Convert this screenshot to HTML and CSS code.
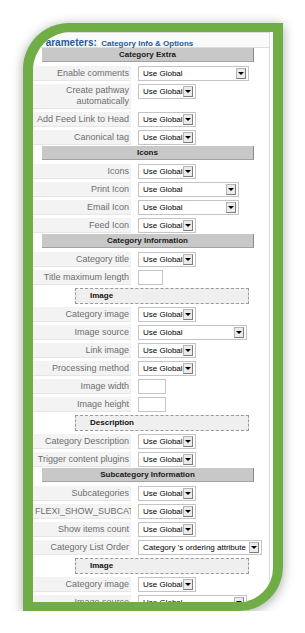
FILE: index.html
```html
<!DOCTYPE html>
<html lang="en">
<head>
    <meta charset="UTF-8">
    <meta name="viewport" content="width=device-width, initial-scale=1.0">
    <title>Category Parameters</title>
    <link rel="stylesheet" href="styles.css">
</head>
<body>
    <div class="page">
        <div class="frame">
            <div class="panel">
                <div class="sheet">
                    <div class="params-title"><span class="params-name">Parameters:</span> <span class="params-sub">Category Info &amp; Options</span></div>

                    <div class="section">Category Extra</div>
                    <div class="row"><div class="key">Enable comments</div><div class="val"><span class="select w-111">Use Global<i class="arrow"></i></span></div></div>
                    <div class="row tall"><div class="key">Create pathway<br>automatically</div><div class="val"><span class="select">Use Global<i class="arrow"></i></span></div></div>
                    <div class="row"><div class="key">Add Feed Link to Head</div><div class="val"><span class="select">Use Global<i class="arrow"></i></span></div></div>
                    <div class="row"><div class="key">Canonical tag</div><div class="val"><span class="select">Use Global<i class="arrow"></i></span></div></div>

                    <div class="section">Icons</div>
                    <div class="row"><div class="key">Icons</div><div class="val"><span class="select">Use Global<i class="arrow"></i></span></div></div>
                    <div class="row"><div class="key">Print Icon</div><div class="val"><span class="select w-101">Use Global<i class="arrow"></i></span></div></div>
                    <div class="row"><div class="key">Email Icon</div><div class="val"><span class="select w-101">Use Global<i class="arrow"></i></span></div></div>
                    <div class="row"><div class="key">Feed Icon</div><div class="val"><span class="select">Use Global<i class="arrow"></i></span></div></div>

                    <div class="section">Category Information</div>
                    <div class="row"><div class="key">Category title</div><div class="val"><span class="select">Use Global<i class="arrow"></i></span></div></div>
                    <div class="row"><div class="key">Title maximum length</div><div class="val"><span class="text w-25"></span></div></div>
                    <div class="sub">Image</div>
                    <div class="row"><div class="key">Category image</div><div class="val"><span class="select">Use Global<i class="arrow"></i></span></div></div>
                    <div class="row"><div class="key">Image source</div><div class="val"><span class="select w-109">Use Global<i class="arrow"></i></span></div></div>
                    <div class="row"><div class="key">Link image</div><div class="val"><span class="select">Use Global<i class="arrow"></i></span></div></div>
                    <div class="row"><div class="key">Processing method</div><div class="val"><span class="select">Use Global<i class="arrow"></i></span></div></div>
                    <div class="row"><div class="key">Image width</div><div class="val"><span class="text"></span></div></div>
                    <div class="row"><div class="key">Image height</div><div class="val"><span class="text"></span></div></div>
                    <div class="sub">Description</div>
                    <div class="row"><div class="key">Category Description</div><div class="val"><span class="select">Use Global<i class="arrow"></i></span></div></div>
                    <div class="row"><div class="key">Trigger content plugins</div><div class="val"><span class="select">Use Global<i class="arrow"></i></span></div></div>

                    <div class="section">Subcategory Information</div>
                    <div class="row"><div class="key">Subcategories</div><div class="val"><span class="select">Use Global<i class="arrow"></i></span></div></div>
                    <div class="row"><div class="key">FLEXI_SHOW_SUBCATS</div><div class="val"><span class="select">Use Global<i class="arrow"></i></span></div></div>
                    <div class="row"><div class="key">Show items count</div><div class="val"><span class="select">Use Global<i class="arrow"></i></span></div></div>
                    <div class="row"><div class="key">Category List Order</div><div class="val"><span class="select w-124">Category 's ordering attribute<i class="arrow"></i></span></div></div>
                    <div class="sub">Image</div>
                    <div class="row"><div class="key">Category image</div><div class="val"><span class="select">Use Global<i class="arrow"></i></span></div></div>
                    <div class="row"><div class="key">Image source</div><div class="val"><span class="select w-109">Use Global<i class="arrow"></i></span></div></div>
                    <div class="row"><div class="key">Link image</div><div class="val"><span class="select">Use Global<i class="arrow"></i></span></div></div>
                </div>
            </div>
        </div>
    </div>
</body>
</html>
```

FILE: styles.css
```css
:root {
    --frame-green: #70ad47;
    --line: #dcdcdc;
    --key-bg: #f3f3f3;
    --key-text: #6e6e6e;
    --title-blue: #1f5b9a;
}

body {
    margin: 0;
    background: #ffffff;
    font-family: "Liberation Sans", Arial, sans-serif;
}

.page {
    padding: 23px 0 0 23px;
}

.frame {
    width: 240px;
    height: 570px;
    padding: 9px 10px;
    background: var(--frame-green);
    border-radius: 46px 0 44px 0;
    box-shadow: 0 2px 12px rgba(0, 0, 0, 0.35);
}

.panel {
    height: 570px;
    background: #ffffff;
    border-radius: 38px 0 34px 0;
    overflow: hidden;
}

.sheet {
    margin-right: 3px;
    border-top: 1px solid var(--line);
    border-right: 1px solid var(--line);
}

.params-title {
    height: 14px;
    line-height: 15px;
    padding-left: 6px;
    background: #fafafa;
    border-bottom: 1px solid var(--line);
    color: var(--title-blue);
    white-space: nowrap;
}

.params-name {
    font-size: 10px;
    font-weight: bold;
}

.params-sub {
    font-size: 8px;
    font-weight: bold;
}

/* grey group headers */
.section {
    width: 211px;
    height: 13px;
    margin: -2px 0 4px 9px;
    background: #c8c8c8;
    border-right: 1px solid #8a8a8a;
    border-bottom: 1px solid #a2a2a2;
    font-size: 8px;
    font-weight: bold;
    line-height: 13px;
    text-align: center;
    color: #1a1a1a;
}

.params-title + .section {
    margin-top: 0;
}

/* dashed sub headers */
.sub {
    box-sizing: border-box;
    width: 174px;
    height: 16px;
    margin: 0 0 3px 42px;
    padding-left: 14px;
    background: #efefef;
    border: 1px dashed #999999;
    font-size: 8px;
    font-weight: bold;
    line-height: 14px;
    color: #111111;
}

.row {
    display: flex;
    height: 15px;
    margin-bottom: 3px;
}

.row.tall {
    height: 25px;
}

.key {
    box-sizing: border-box;
    flex: none;
    width: 98px;
    padding: 0 2px;
    background: var(--key-bg);
    border-bottom: 1px solid #e6e6e6;
    font-size: 9px;
    line-height: 15px;
    text-align: right;
    color: var(--key-text);
    white-space: nowrap;
    overflow: hidden;
}

.row.tall .key {
    padding-top: 1px;
    line-height: 11px;
}

.val {
    padding-left: 7px;
}

.select {
    box-sizing: border-box;
    display: flex;
    align-items: center;
    justify-content: space-between;
    width: 58px;
    height: 15px;
    padding: 0 2px 0 4px;
    background: #ffffff;
    border: 1px solid #c4c4c4;
    font-size: 8px;
    color: #000000;
    white-space: nowrap;
}

.arrow {
    box-sizing: border-box;
    display: flex;
    align-items: flex-end;
    justify-content: center;
    width: 10px;
    height: 11px;
    padding-bottom: 3px;
    background: #ebebeb;
    border: 1px solid #7d7d7d;
    border-top-color: #b5b5b5;
    border-left-color: #b5b5b5;
}

.arrow::after {
    content: '';
    border-left: 3px solid transparent;
    border-right: 3px solid transparent;
    border-top: 3px solid #000000;
}

.w-101 { width: 101px; }
.w-109 { width: 109px; }
.w-111 { width: 111px; }
.w-124 { width: 124px; }

.text {
    box-sizing: border-box;
    display: block;
    width: 28px;
    height: 15px;
    background: #ffffff;
    border: 1px solid #c4c4c4;
}

.text.w-25 {
    width: 25px;
}
```
